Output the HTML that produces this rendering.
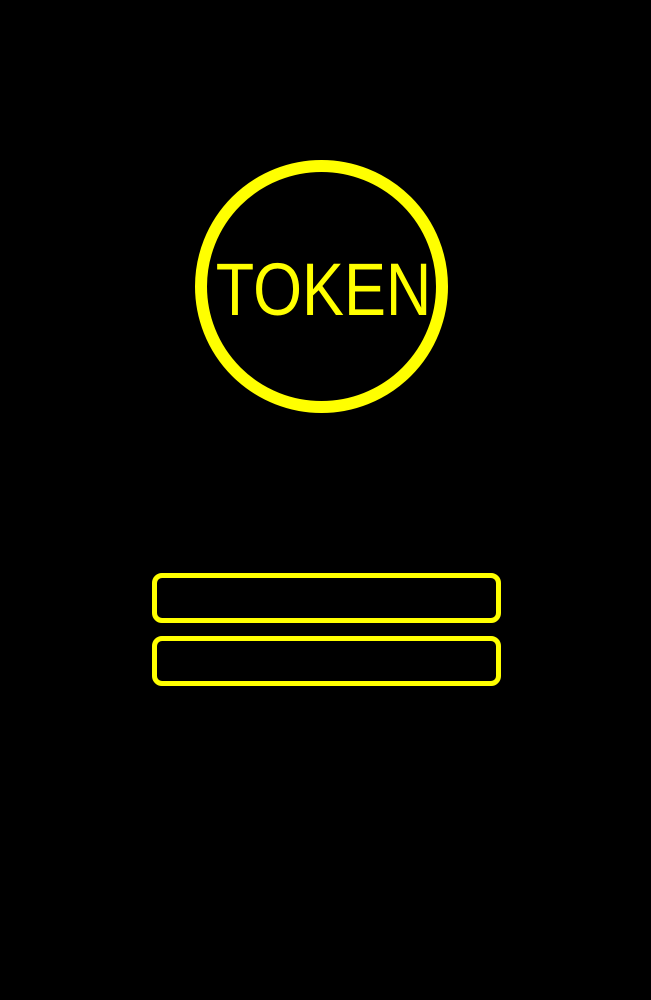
<!DOCTYPE html>
<html><head><style>
html,body{margin:0;padding:0;background:#000;width:651px;height:1000px;overflow:hidden}
.c{position:absolute;left:195px;top:160px;width:229px;height:229px;border:12px solid #ff0;border-radius:50%}
.t{position:absolute;left:0;top:253px;width:647px;text-align:center;font-family:"Liberation Sans",sans-serif;font-size:74px;line-height:74px;color:#ff0;transform:scaleX(0.85);transform-origin:324px 0}
.b{position:absolute;left:152px;width:339px;height:40px;border:5px solid #ff0;border-radius:10px}
</style></head><body>
<div class="c"></div>
<div class="t">TOKEN</div>
<div class="b" style="top:573px"></div>
<div class="b" style="top:636px"></div>
</body></html>
